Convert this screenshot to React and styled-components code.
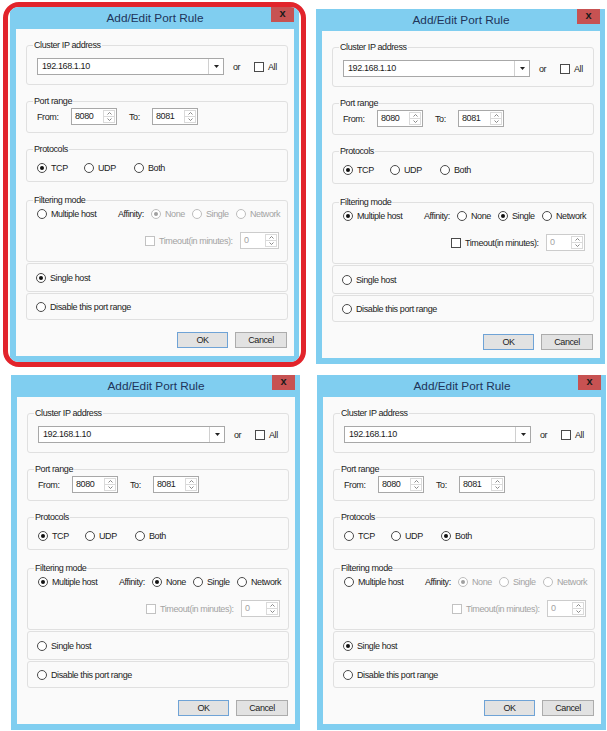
import styled, { createGlobalStyle } from 'styled-components'

const GlobalStyle = createGlobalStyle`
  body {
    margin: 0;
    background: #ffffff;
    font-family: "Liberation Sans", Arial, sans-serif;
  }
`

const Page = styled.div`
  display: grid;
  grid-template-columns: 303px 1fr;
  grid-template-rows: 365px 356px;
  row-gap: 8px;
  width: 607px;
  box-sizing: border-box;
  padding: 2px 0 0 3px;
`

const Cell = styled.div`
  display: flex;
  align-items: flex-start;
  padding: ${p => p.$top || 0}px 0 0 ${p => p.$left || 0}px;
`

const Highlight = styled.div`
  border: 5px solid #e2242b;
  border-radius: 16px;
  padding: 0 2px;
  overflow: hidden;
  background: #fffdf6;
`

const Frame = styled.div`
  width: 289px;
  height: 355px;
  box-sizing: border-box;
  background: #80cef0;
  padding: 0 5px 6px 6px;
  display: flex;
  flex-direction: column;
`

const TitleBar = styled.div`
  height: 22px;
  display: grid;
  grid-template-columns: 1fr auto 1fr;
  align-items: start;
`

const Title = styled.div`
  grid-column: 2;
  line-height: 23px;
  font-size: 11.8px;
  color: #21345a;
  white-space: nowrap;
`

const CloseButton = styled.div`
  grid-column: 3;
  justify-self: end;
  width: 23px;
  height: 15px;
  background: #c75252;
  color: #1a1a1a;
  font-size: 11px;
  font-weight: bold;
  line-height: 13px;
  text-align: center;
`

const Client = styled.div`
  flex: 1;
  background: #fafafa;
  padding: 11px 6px 8px 10px;
  display: flex;
  flex-direction: column;
  font-size: 9px;
  letter-spacing: -0.4px;
  color: #1c1c1c;
`

const Group = styled.fieldset`
  margin: ${p => p.$gap || 0}px 0 0 0;
  padding: ${p => p.$pad}px 4px 0 10px;
  height: ${p => p.$h}px;
  box-sizing: border-box;
  min-width: 0;
  border: 1px solid #e0e0e0;
  border-radius: 3px;
`

const Legend = styled.legend`
  font-size: 9px;
  line-height: 10px;
  padding: 0 1px;
  margin-left: -4px;
  color: #1c1c1c;
`

const Panel = styled.div`
  margin-top: 1px;
  height: ${p => p.$h}px;
  box-sizing: border-box;
  border: 1px solid #e0e0e0;
  border-radius: 3px;
  padding-left: 9px;
  display: flex;
  align-items: center;
`

const Row = styled.div`
  display: flex;
  align-items: center;
  height: ${p => p.$h || 12}px;
  margin: ${p => p.$mt || 0}px 0 0 ${p => p.$ml || 0}px;
`

const Text = styled.span`
  width: ${p => (p.$w ? `${p.$w}px` : 'auto')};
  margin-left: ${p => p.$ml || 0}px;
  color: ${p => (p.$disabled ? '#a3a3a3' : '#1c1c1c')};
  white-space: nowrap;
  flex-shrink: 0;
`

const Option = styled.span`
  display: inline-flex;
  align-items: center;
  gap: 4px;
  width: ${p => (p.$w ? `${p.$w}px` : 'auto')};
  flex-shrink: 0;
  white-space: nowrap;
  color: ${p => (p.$disabled ? '#a3a3a3' : '#1c1c1c')};
`

const Round = styled.span`
  width: 10px;
  height: 10px;
  box-sizing: border-box;
  border-radius: 50%;
  border: 1px solid ${p => (p.$disabled ? '#bdbdbd' : '#4a4a4a')};
  background: #ffffff;
  display: inline-flex;
  align-items: center;
  justify-content: center;
  flex-shrink: 0;

  &::after {
    content: '';
    width: 4px;
    height: 4px;
    border-radius: 50%;
    background: ${p => (p.$disabled ? '#a0a0a0' : '#111111')};
    display: ${p => (p.$checked ? 'block' : 'none')};
  }
`

const Square = styled.span`
  width: 10px;
  height: 10px;
  box-sizing: border-box;
  border: 1px solid ${p => (p.$disabled ? '#c2c2c2' : '#4a4a4a')};
  background: #ffffff;
  flex-shrink: 0;
`

const Combo = styled.div`
  width: 187px;
  height: 17px;
  box-sizing: border-box;
  border: 1px solid #a8a8a8;
  background: #ffffff;
  display: flex;
  flex-shrink: 0;
`

const ComboValue = styled.span`
  flex: 1;
  padding-left: 4px;
  line-height: 15px;
`

const ComboArrow = styled.span`
  width: 14px;
  border-left: 1px solid #d0d0d0;
  display: flex;
  align-items: center;
  justify-content: center;
`

const Spin = styled.div`
  width: ${p => p.$w}px;
  height: 17px;
  box-sizing: border-box;
  border: 1px solid ${p => (p.$disabled ? '#cccccc' : '#a8a8a8')};
  background: #ffffff;
  display: flex;
  flex-shrink: 0;
`

const SpinValue = styled.span`
  flex: 1;
  padding-left: 3px;
  line-height: 15px;
  color: ${p => (p.$disabled ? '#a3a3a3' : '#1c1c1c')};
`

const SpinButtons = styled.span`
  width: 10px;
  margin: 1px;
  border: 1px solid #dadada;
  display: flex;
  flex-direction: column;
`

const SpinHalf = styled.span`
  flex: 1;
  display: flex;
  align-items: center;
  justify-content: center;
  & + & {
    border-top: 1px solid #dadada;
  }
`

const ButtonRow = styled.div`
  display: flex;
  justify-content: flex-end;
  gap: 7px;
  margin-top: 12px;
  padding-right: 1px;
`

const Button = styled.div`
  width: ${p => p.$w}px;
  height: 16px;
  box-sizing: border-box;
  border: 1px solid ${p => (p.$primary ? '#6fa3d6' : '#acacac')};
  background: #e2e2e2;
  text-align: center;
  line-height: 14px;
`

const Radio = ({ label, checked, disabled, w }) => (
  <Option $w={w} $disabled={disabled}>
    <Round $checked={checked} $disabled={disabled} />
    {label}
  </Option>
)

const Chevron = ({ up }) => (
  <svg width="5" height="3" viewBox="0 0 5 3">
    <path d={up ? 'M0.5 2.5 L2.5 0.5 L4.5 2.5' : 'M0.5 0.5 L2.5 2.5 L4.5 0.5'} fill="none" stroke="#7a7a7a" strokeWidth="0.9" />
  </svg>
)

const Spinner = ({ value, w, disabled }) => (
  <Spin $w={w} $disabled={disabled}>
    <SpinValue $disabled={disabled}>{value}</SpinValue>
    <SpinButtons>
      <SpinHalf><Chevron up /></SpinHalf>
      <SpinHalf><Chevron /></SpinHalf>
    </SpinButtons>
  </Spin>
)

const Dialog = ({ protocol, mode, affinity }) => {
  const multi = mode === 'multiple'
  const timeoutOn = multi && affinity !== 'none'

  return (
    <Frame>
      <TitleBar>
        <Title>Add/Edit Port Rule</Title>
        <CloseButton>x</CloseButton>
      </TitleBar>
      <Client>
        <Group $h={45} $pad={8}>
          <Legend>Cluster IP address</Legend>
          <Row $h={17}>
            <Combo>
              <ComboValue>192.168.1.10</ComboValue>
              <ComboArrow>
                <svg width="5" height="3" viewBox="0 0 5 3">
                  <path d="M0 0 H5 L2.5 3 Z" fill="#222" />
                </svg>
              </ComboArrow>
            </Combo>
            <Text $ml={9} $w={21}>or</Text>
            <Option>
              <Square />
              All
            </Option>
          </Row>
        </Group>

        <Group $h={37} $pad={2} $gap={11}>
          <Legend>Port range</Legend>
          <Row $h={17}>
            <Text $w={34}>From:</Text>
            <Spinner value="8080" w={46} />
            <Text $ml={12} $w={23}>To:</Text>
            <Spinner value="8081" w={46} />
          </Row>
        </Group>

        <Group $h={38} $pad={8} $gap={11}>
          <Legend>Protocols</Legend>
          <Row>
            <Radio label="TCP" w={47} checked={protocol === 'tcp'} />
            <Radio label="UDP" w={50} checked={protocol === 'udp'} />
            <Radio label="Both" checked={protocol === 'both'} />
          </Row>
        </Group>

        <Group $h={67} $pad={3} $gap={13}>
          <Legend>Filtering mode</Legend>
          <Row>
            <Radio label="Multiple host" w={81} checked={multi} />
            <Text $w={33}>Affinity:</Text>
            <Radio label="None" w={41} checked={affinity === 'none'} disabled={!multi} />
            <Radio label="Single" w={44} checked={affinity === 'single'} disabled={!multi} />
            <Radio label="Network" checked={affinity === 'network'} disabled={!multi} />
          </Row>
          <Row $h={17} $mt={12} $ml={108}>
            <Option $w={95} $disabled={!timeoutOn}>
              <Square $disabled={!timeoutOn} />
              Timeout(in minutes):
            </Option>
            <Spinner value="0" w={39} disabled />
          </Row>
        </Group>

        <Panel $h={29}>
          <Radio label="Single host" checked={mode === 'single'} />
        </Panel>
        <Panel $h={27}>
          <Radio label="Disable this port range" checked={mode === 'disabled'} />
        </Panel>

        <ButtonRow>
          <Button $w={51} $primary>OK</Button>
          <Button $w={52}>Cancel</Button>
        </ButtonRow>
      </Client>
    </Frame>
  )
}

const App = () => (
  <>
    <GlobalStyle />
    <Page>
      <Cell>
        <Highlight>
          <Dialog protocol="tcp" mode="single" affinity="none" />
        </Highlight>
      </Cell>
      <Cell $left={10} $top={7}>
        <Dialog protocol="tcp" mode="multiple" affinity="single" />
      </Cell>
      <Cell $left={8}>
        <Dialog protocol="tcp" mode="multiple" affinity="none" />
      </Cell>
      <Cell $left={11}>
        <Dialog protocol="both" mode="single" affinity="none" />
      </Cell>
    </Page>
  </>
)

export default App
